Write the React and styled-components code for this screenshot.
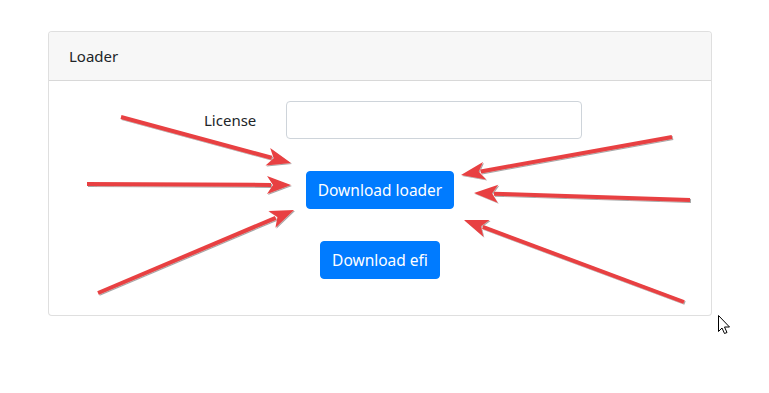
import React from "react";
import styled, { createGlobalStyle } from "styled-components";

const GlobalStyle = createGlobalStyle`
  html, body {
    margin: 0;
    padding: 0;
    background: #fff;
  }
  body {
    font-family: "Noto Sans", "Open Sans", "Liberation Sans", sans-serif;
    color: #212529;
  }
`;

const Page = styled.div`
  position: relative;
  width: 769px;
  height: 393px;
  padding: 31px 0 0 48px;
  box-sizing: border-box;
  overflow: hidden;
`;

const Card = styled.div`
  width: 664px;
  border: 1px solid rgba(0, 0, 0, 0.125);
  border-radius: 4px;
  box-sizing: border-box;
  background: #fff;
`;

const CardHeader = styled.div`
  padding: 12px 20px;
  font-size: 15px;
  line-height: 24px;
  background: #f7f7f7;
  border-bottom: 1px solid rgba(0, 0, 0, 0.125);
  border-radius: 3px 3px 0 0;
`;

const CardBody = styled.div`
  padding: 20px 20px 36px;
  display: flex;
  flex-direction: column;
  align-items: center;
`;

const FormRow = styled.div`
  align-self: flex-start;
  display: flex;
  align-items: center;
  gap: 30px;
  padding-left: 135px;
  margin-bottom: 32px;
`;

const Label = styled.label`
  font-size: 15px;
  line-height: 24px;
`;

const Input = styled.input`
  width: 296px;
  height: 38px;
  box-sizing: border-box;
  border: 1px solid #ced4da;
  border-radius: 4px;
  padding: 6px 12px;
  font: inherit;
  outline: none;
`;

const Button = styled.button`
  height: 38px;
  box-sizing: border-box;
  padding: 0 ${(p) => p.$pad}px;
  margin-bottom: ${(p) => p.$gap || 0}px;
  border: 1px solid #007bff;
  border-radius: 4px;
  background: #007bff;
  color: #fff;
  font-family: inherit;
  font-size: 15.5px;
  line-height: 24px;
  cursor: pointer;
`;

const Overlay = styled.svg`
  position: absolute;
  left: 0;
  top: 0;
  pointer-events: none;
`;

const arrows = [
  [121, 117, 291, 163],
  [87, 184, 291, 185],
  [98, 293, 294, 210],
  [672, 137, 461, 175],
  [690, 200, 474, 193],
  [684, 302, 464, 220],
];

function Arrow({ x1, y1, x2, y2 }) {
  const dx = x2 - x1;
  const dy = y2 - y1;
  const len = Math.hypot(dx, dy);
  const ux = dx / len;
  const uy = dy / len;
  const hl = 24;
  const hw = 9;
  const bx = x2 - ux * hl;
  const by = y2 - uy * hl;
  const ex = x2 - ux * (hl - 4);
  const ey = y2 - uy * (hl - 4);
  const pts = [
    [x2, y2],
    [bx - uy * hw, by + ux * hw],
    [x2 - ux * (hl - 6), y2 - uy * (hl - 6)],
    [bx + uy * hw, by - ux * hw],
  ]
    .map((p) => p.join(","))
    .join(" ");
  return (
    <g>
      <line x1={x1} y1={y1} x2={ex} y2={ey} stroke="#e84142" strokeWidth="4" />
      <polygon points={pts} fill="#e84142" />
    </g>
  );
}

export default function App() {
  return (
    <>
      <GlobalStyle />
      <Page>
        <Card>
          <CardHeader>Loader</CardHeader>
          <CardBody>
            <FormRow>
              <Label htmlFor="license">License</Label>
              <Input id="license" type="text" />
            </FormRow>
            <Button $pad={11} $gap={32}>Download loader</Button>
            <Button $pad={11}>Download efi</Button>
          </CardBody>
        </Card>
        <Overlay width="769" height="393">
          <defs>
            <filter id="sh" x="-10%" y="-10%" width="120%" height="120%">
              <feDropShadow dx="1" dy="1" stdDeviation="0.6" floodColor="#000" floodOpacity="0.35" />
            </filter>
          </defs>
          <g filter="url(#sh)">
            {arrows.map(([x1, y1, x2, y2], i) => (
              <Arrow key={i} x1={x1} y1={y1} x2={x2} y2={y2} />
            ))}
          </g>
          <path
            d="M718.5 315.5 L718.5 331.5 L722 328 L724.5 333.5 L727 332.5 L724.5 327 L729.5 327 Z"
            fill="#fff"
            stroke="#000"
            strokeWidth="1"
            strokeLinejoin="miter"
          />
        </Overlay>
      </Page>
    </>
  );
}
